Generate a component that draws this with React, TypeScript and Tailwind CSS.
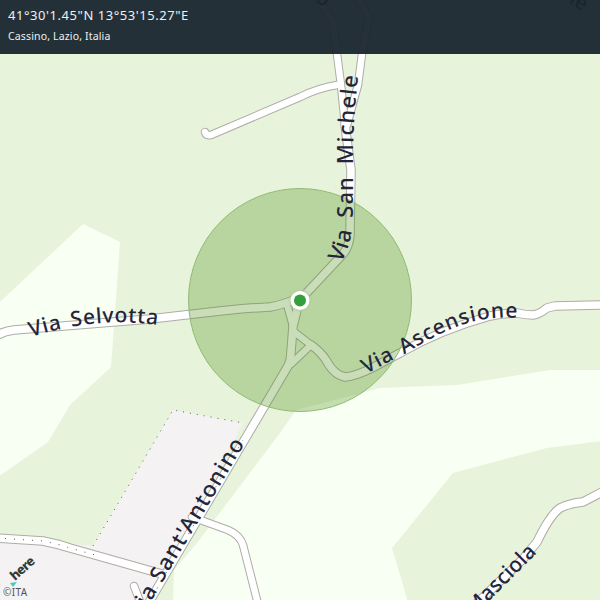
const roads: { d: string; w: number }[] = [
  { d: "M315 -6 L333 22 L337 54 L341 85 L345 125", w: 7 },
  { d: "M356 -6 L369 17 L362 54 L358 85 L347 125", w: 7 },
  { d: "M345 125 L351 170 L350 235 Q349 247 343 254 L300 300", w: 8 },
  { d: "M205 132 Q206 136 211 135 L300 97 Q318 88 337 85", w: 7 },
  { d: "M-4 336 Q4 331 14 330 L150 319 L220 311 Q250 308 270 307 Q282 305 296 299", w: 8 },
  { d: "M298 304 Q296 316 293 326 L291 352 Q291 360 288 366 L148 604", w: 8 },
  { d: "M288 308 L293 326", w: 7 },
  { d: "M293 331 L311 345 L291 364", w: 7 },
  { d: "M311 345 Q320 351 326 360 Q334 375 345 377 Q356 376 372 368 L400 353 Q440 330 490 316 Q505 313 517 313 Q525 315 533 315 Q540 314 547 308 L555 306 L604 305", w: 8 },
  { d: "M604 491 L583 502 Q570 503 560 508 Q550 515 537 542 L522 560 L476 604", w: 8 },
  { d: "M-4 538 L43 541 Q58 544 70 548 L162 574", w: 8 },
  { d: "M192 517 L228 530 Q240 535 243 545 L258 604", w: 7 },
  { d: "M134 586 L141 604", w: 7 },
];

const labels = [
  { id: "l1", d: "M31 337 Q100 315 163 326", t: "Via Selvotta", s: 21, ls: 0.7, ws: 3 },
  { id: "l2", d: "M341 263 Q352 245 353 215 L353 150 Q354 110 359 70", t: "Via San Michele", s: 22, ls: 1.1, ws: 5 },
  { id: "l3", d: "M366 374 L408 352 Q440 332 470 322 Q495 316 522 318", t: "Via Ascensione", s: 21, ls: 0.9, ws: 3 },
  { id: "l4", d: "M140 620 L250 435", t: "Via Sant'Antonino", s: 22, ls: 1.2, ws: 0 },
  { id: "l5", d: "M474 616 L545 545", t: "Masciola", s: 21, ls: 0.2, ws: 0 },
  { id: "l6", d: "M308 -8 L330 16", t: "zo", s: 20, ls: 0, ws: 0 },
  { id: "l7", d: "M552 -8 L600 22", t: "one", s: 20, ls: 0, ws: 0 },
];

export default function App() {
  return (
    <div className="relative w-[600px] h-[600px] overflow-hidden bg-[#e8f3dc]">
      <svg viewBox="0 0 600 600" width="600" height="600" className="block">
        <defs>
          {labels.map((l) => (
            <path key={l.id} id={l.id} d={l.d} fill="none" />
          ))}
          <filter id="glow" x="-50%" y="-50%" width="200%" height="200%">
            <feGaussianBlur stdDeviation="1" />
          </filter>
        </defs>
        <rect width="600" height="600" fill="#e8f3dc" />
        <polygon points="-2,304 83,224 120,242 111,367 70,405 48,442 8,470 -2,477" fill="#f8fff3" />
        <polygon points="173,602 174,570 197,543 280,433 296,410 380,388 457,385 550,370 602,370 602,441 547,448 453,473 392,548 408,602" fill="#f8fff3" />
        <polygon points="173,410 243,423 150,602 -2,602 -2,537 93,546" fill="#f4f2f2" />
        <polyline points="93,546 173,410 243,423" fill="none" stroke="#5e5e5e" strokeWidth="1" strokeDasharray="1 6" />
        {roads.map((r, i) => (
          <path key={`o${i}`} d={r.d} fill="none" stroke="#aeaca6" strokeWidth={r.w + 1.5} strokeLinecap="round" strokeLinejoin="round" />
        ))}
        {roads.map((r, i) => (
          <path key={`i${i}`} d={r.d} fill="none" stroke="#ffffff" strokeWidth={r.w - 0.5} strokeLinecap="round" strokeLinejoin="round" />
        ))}
        <path d="M-4 538 L43 541 Q58 544 70 548 L95 555 M148 604 L243 440" fill="none" stroke="#555" strokeWidth="1" strokeDasharray="1 8" />
        <circle cx="300" cy="300" r="111.5" fill="#498f14" fillOpacity="0.3" stroke="#8fbb76" strokeWidth="1" />
        <circle cx="300" cy="300.5" r="10.5" fill="#b4c9a4" filter="url(#glow)" />
        <circle cx="300" cy="300.5" r="9.5" fill="#ffffff" />
        <circle cx="300" cy="300.5" r="6" fill="#33a03c" />
        {labels.map((l) => (
          <text key={`t${l.id}`} fill="#24253a" fontSize={l.s} fontWeight="500" letterSpacing={l.ls} wordSpacing={l.ws} fontFamily="'Noto Sans', sans-serif">
            <textPath href={`#${l.id}`}>{l.t}</textPath>
          </text>
        ))}
        <text x="0" y="0" transform="translate(15 581) rotate(-42)" fill="#2c3a3a" fontSize="13" fontWeight="800" fontFamily="'Noto Sans', sans-serif" letterSpacing="-0.7">here</text>
        <polygon points="10,583 17,582 13,587" fill="#49c8c0" />
        <text x="3" y="596" fill="#50555a" fontSize="10" letterSpacing="0.4" fontFamily="'Noto Sans', sans-serif">©ITA</text>
      </svg>
      <div className="absolute top-0 left-0 w-full h-[54px] bg-[#19252e]/95 px-2 pt-[6px] text-[#eef1f2] font-['Noto_Sans',sans-serif]">
        <div className="text-[13px] leading-[18px] tracking-[0.55px]">41°30'1.45"N 13°53'15.27"E</div>
        <div className="text-[10.5px] leading-[14px] mt-[5px] tracking-[0.15px]">Cassino, Lazio, Italia</div>
      </div>
    </div>
  );
}
